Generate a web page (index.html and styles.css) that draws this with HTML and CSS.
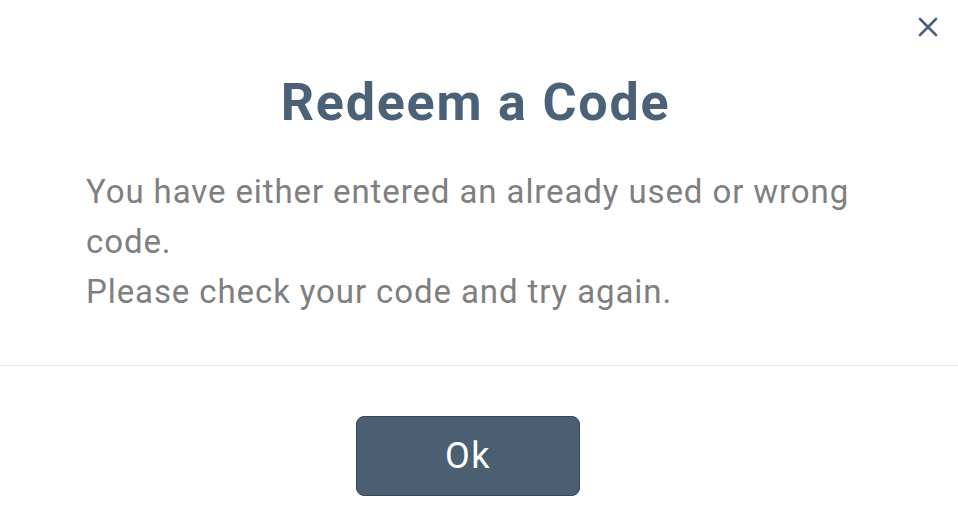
FILE: index.html
```html
<!DOCTYPE html>
<html lang="en">
<head>
    <meta charset="UTF-8">
    <meta name="viewport" content="width=device-width, initial-scale=1.0">
    <title>Redeem a Code</title>
    <link rel="stylesheet" href="styles.css">
</head>
<body>
    <div class="modal">
        <div class="modal-header">
            <button class="close-button" aria-label="Close">
                <svg width="20" height="20" viewBox="0 0 20 20">
                    <path d="M2 2 L18 18 M18 2 L2 18" stroke="#4a6178" stroke-width="2.6" stroke-linecap="round"/>
                </svg>
            </button>
            <h1>Redeem a Code</h1>
        </div>

        <div class="modal-body">
            <p>You have either entered an already used or wrong code.<br>Please check your code and try again.</p>
        </div>

        <div class="modal-footer">
            <button class="ok-button">Ok</button>
        </div>
    </div>
</body>
</html>
```

FILE: styles.css
```css
body {
    font-family: Roboto, "Noto Sans", sans-serif;
    margin: 0;
    background-color: white;
}
.modal {
    width: 958px;
}
.modal-header {
    position: relative;
    padding: 73px 7px 0 0;
    text-align: center;
}
h1 {
    margin: 0;
    font-size: 52px;
    font-weight: 700;
    letter-spacing: 1.8px;
    color: #4a6178;
    line-height: 60px;
}
.close-button {
    position: absolute;
    top: 17px;
    right: 20px;
    background: none;
    border: none;
    padding: 0;
    cursor: pointer;
}
.close-button svg {
    display: block;
}
.modal-body {
    padding: 34px 86px 48px;
    border-bottom: 1px solid #e6e6e6;
}
.modal-body p {
    margin: 0;
    font-size: 33px;
    letter-spacing: 0.9px;
    line-height: 50px;
    color: #7f7f7f;
}
.modal-footer {
    padding: 50px 22px 0 0;
    text-align: center;
}
.ok-button {
    width: 224px;
    height: 80px;
    background-color: #4b5f72;
    border: 1px solid #364656;
    border-radius: 8px;
    color: white;
    font-family: Roboto, "Noto Sans", sans-serif;
    font-size: 36px;
    letter-spacing: 1.5px;
    cursor: pointer;
}
```
